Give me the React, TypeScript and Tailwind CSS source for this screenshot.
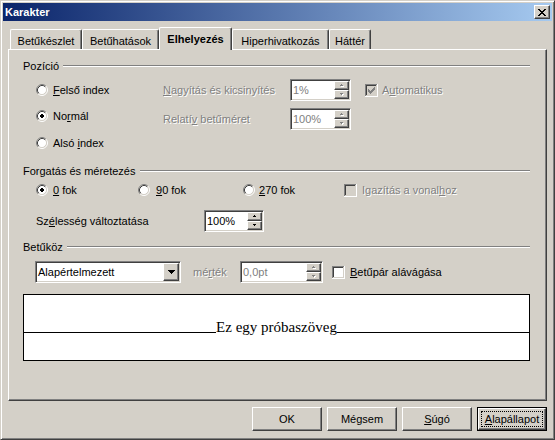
import React from "react";

const ui = "font-['Liberation_Sans',Arial,sans-serif] text-[11px] leading-[13px]";
const off = "text-[#808080] [text-shadow:1px_1px_0_#fff]";
const raised =
  "border border-t-white border-l-white border-r-[#404040] border-b-[#404040] shadow-[inset_-1px_-1px_0_#808080]";
const sunken =
  "border border-t-[#808080] border-l-[#808080] border-r-white border-b-white shadow-[inset_1px_1px_0_#404040,inset_-1px_-1px_0_#d4d0c8]";

const Radio = ({ checked }: { checked?: boolean }) => (
  <svg width="12" height="12" viewBox="0 0 12 12" className="shrink-0">
    <circle cx="6" cy="6" r="4.5" fill="#fff" />
    <path d="M2.11 9.89 A5.5 5.5 0 0 1 9.89 2.11" stroke="#808080" fill="none" />
    <path d="M9.89 2.11 A5.5 5.5 0 0 1 2.11 9.89" stroke="#fff" fill="none" />
    <path d="M2.82 9.18 A4.5 4.5 0 0 1 9.18 2.82" stroke="#404040" fill="none" />
    <path d="M9.18 2.82 A4.5 4.5 0 0 1 2.82 9.18" stroke="#d4d0c8" fill="none" />
    {checked && (
      <g shapeRendering="crispEdges" fill="#000">
        <rect x="4" y="5" width="4" height="2" />
        <rect x="5" y="4" width="2" height="4" />
      </g>
    )}
  </svg>
);

// classic 13x13 check box, drawn pixel by pixel
const Check = ({ checked, disabled }: { checked?: boolean; disabled?: boolean }) => {
  const mark = disabled ? "#808080" : "#000";
  const cols = [
    [3, 5], [4, 6], [5, 7], [6, 6], [7, 5], [8, 4], [9, 3],
  ];
  return (
    <svg width="13" height="13" viewBox="0 0 13 13" shapeRendering="crispEdges" className="shrink-0">
      <rect x="0" y="0" width="13" height="13" fill="#fff" />
      <rect x="0" y="0" width="12" height="1" fill="#808080" />
      <rect x="0" y="0" width="1" height="12" fill="#808080" />
      <rect x="1" y="1" width="10" height="1" fill="#404040" />
      <rect x="1" y="1" width="1" height="10" fill="#404040" />
      <rect x="1" y="11" width="11" height="1" fill="#d4d0c8" />
      <rect x="11" y="1" width="1" height="11" fill="#d4d0c8" />
      <rect x="2" y="2" width="9" height="9" fill={disabled ? "#d4d0c8" : "#fff"} />
      {checked && cols.map(([x, y]) => <rect key={x} x={x} y={y} width="1" height="3" fill={mark} />)}
    </svg>
  );
};

const SpinArrow = ({ up, disabled }: { up?: boolean; disabled?: boolean }) => {
  const rows = up ? [[1, 0, 1], [0, 1, 3]] : [[0, 0, 3], [1, 1, 1]];
  return (
    <svg width="4" height="3" viewBox="0 0 4 3" shapeRendering="crispEdges">
      {disabled && rows.map(([x, y, w]) => <rect key={"s" + y} x={x + 1} y={y + 1} width={w} height="1" fill="#fff" />)}
      {rows.map(([x, y, w]) => <rect key={y} x={x} y={y} width={w} height="1" fill={disabled ? "#808080" : "#000"} />)}
    </svg>
  );
};

const Spin = ({ value, w, disabled }: { value: string; w: string; disabled?: boolean }) => (
  <div className={`${sunken} ${w} bg-white h-[22px] p-[1px] flex shrink-0`}>
    <div className={`flex-1 flex items-center pl-[1px] ${disabled ? "text-[#808080]" : ""}`}>{value}</div>
    <div className="w-[15px] flex flex-col">
      <div className={`${raised} bg-[#d4d0c8] h-[9px] flex items-center justify-center`}>
        <SpinArrow up disabled={disabled} />
      </div>
      <div className={`${raised} bg-[#d4d0c8] h-[9px] flex items-center justify-center`}>
        <SpinArrow disabled={disabled} />
      </div>
    </div>
  </div>
);

const Group = ({ title }: { title: string }) => (
  <div className="h-[14px] flex items-center">
    <span>{title}</span>
    <div className="flex-1 ml-[4px] h-[2px] border-t border-t-[#808080] border-b border-b-white" />
  </div>
);

const Tab = ({ w, active, children }: { w: string; active?: boolean; children: React.ReactNode }) => (
  <div
    className={`${w} flex justify-center border-l border-t border-r border-l-white border-t-white border-r-[#404040] shadow-[inset_-1px_0_0_#808080] rounded-t-[2px] bg-[#d4d0c8] ${
      active ? "h-[23px] mb-[-1px] relative z-10 pt-[5px] font-bold" : "h-[20px] pt-[5px]"
    }`}
  >
    {children}
  </div>
);

const Btn = ({ children, def }: { children: React.ReactNode; def?: boolean }) =>
  def ? (
    <div className="w-[70px] h-[24px] border border-black flex">
      <div className={`${raised} flex-1 flex p-[2px]`}>
        <div className="flex-1 border border-dotted border-black flex items-center justify-center">{children}</div>
      </div>
    </div>
  ) : (
    <div className={`${raised} w-[70px] h-[24px] flex items-center justify-center`}>{children}</div>
  );

const CloseX = () => {
  const rows = [
    [[0, 2], [6, 2]],
    [[1, 2], [5, 2]],
    [[2, 4]],
    [[3, 2]],
    [[2, 4]],
    [[1, 2], [5, 2]],
    [[0, 2], [6, 2]],
  ];
  return (
    <svg width="8" height="7" viewBox="0 0 8 7" shapeRendering="crispEdges">
      {rows.map((r, y) => r.map(([x, w]) => <rect key={y + "-" + x} x={x} y={y} width={w} height="1" fill="#000" />))}
    </svg>
  );
};

export default function App() {
  return (
    <div
      className={`${ui} w-[555px] h-[440px] bg-[#d4d0c8] text-black border border-t-[#d4d0c8] border-l-[#d4d0c8] border-r-[#404040] border-b-[#404040] shadow-[inset_1px_1px_0_#fff,inset_-1px_-1px_0_#808080] p-[2px] flex flex-col`}
    >
      <div className="h-[18px] shrink-0 flex items-center pl-[2px] pr-[2px] bg-[linear-gradient(to_right,#0a246a,#a6caf0)]">
        <span className="flex-1 font-bold text-white">Karakter</span>
        <div className={`${raised} bg-[#d4d0c8] w-[16px] h-[14px] flex items-center justify-center`}>
          <CloseX />
        </div>
      </div>

      <div className="flex flex-col px-[5px]">
        <div className="mt-[6px] h-[22px] flex items-end pl-[2px]">
          <Tab w="w-[72px]">Betűkészlet</Tab>
          <Tab w="w-[77px]">Betűhatások</Tab>
          <Tab w="w-[73px]" active>Elhelyezés</Tab>
          <Tab w="w-[97px]">Hiperhivatkozás</Tab>
          <Tab w="w-[42px]">Háttér</Tab>
        </div>

        <div className="h-[352px] border border-t-white border-l-white border-r-[#404040] border-b-[#404040] shadow-[inset_-1px_-1px_0_#808080] flex flex-col pl-[14px] pr-[16px] pt-[9px]">
          <Group title="Pozíció" />
          <div className="flex pl-[13px]">
            <div className="w-[127px] flex flex-col">
              <div className="mt-[10px] h-[14px] flex items-center gap-[5px]">
                <Radio />
                <span><u>F</u>első index</span>
              </div>
              <div className="mt-[12px] h-[14px] flex items-center gap-[5px]">
                <Radio checked />
                <span>No<u>r</u>mál</span>
              </div>
              <div className="mt-[13px] h-[14px] flex items-center gap-[5px]">
                <Radio />
                <span>Alsó <u>i</u>ndex</span>
              </div>
            </div>
            <div className="flex flex-col">
              <div className="mt-[6px] h-[22px] flex items-center">
                <span className={`w-[127px] ${off}`}><u>N</u>agyítás és kicsinyítés</span>
                <Spin value="1%" w="w-[61px]" disabled />
                <div className="ml-[14px] flex items-center gap-[4px]">
                  <Check checked disabled />
                  <span className={off}>A<u>u</u>tomatikus</span>
                </div>
              </div>
              <div className="mt-[7px] h-[22px] flex items-center">
                <span className={`w-[127px] ${off}`}>Relatí<u>v</u> betűméret</span>
                <Spin value="100%" w="w-[61px]" disabled />
              </div>
            </div>
          </div>

          <div className="mt-[14px]">
            <Group title="Forgatás és méretezés" />
          </div>
          <div className="mt-[5px] h-[14px] flex items-center pl-[13px]">
            <div className="w-[102px] flex items-center gap-[5px]">
              <Radio checked />
              <span><u>0</u> fok</span>
            </div>
            <div className="w-[105px] flex items-center gap-[6px]">
              <Radio />
              <span><u>9</u>0 fok</span>
            </div>
            <div className="w-[101px] flex items-center gap-[4px]">
              <Radio />
              <span><u>2</u>70 fok</span>
            </div>
            <div className="flex items-center gap-[5px]">
              <Check disabled />
              <span className={off}>Igazítás a vonal<u>h</u>oz</span>
            </div>
          </div>
          <div className="mt-[13px] h-[22px] flex items-center pl-[13px]">
            <span className="w-[168px]">Sz<u>é</u>lesség változtatása</span>
            <Spin value="100%" w="w-[60px]" />
          </div>

          <div className="mt-[8px]">
            <Group title="Betűköz" />
          </div>
          <div className="mt-[7px] h-[22px] flex items-center pl-[12px]">
            <div className={`${sunken} bg-white w-[146px] h-[22px] p-[1px] flex`}>
              <div className="flex-1 flex items-center pl-[1px]">Alapértelmezett</div>
              <div className={`${raised} bg-[#d4d0c8] w-[16px] flex items-center justify-center`}>
                <svg width="7" height="4" viewBox="0 0 7 4" shapeRendering="crispEdges">
                  <rect x="0" y="0" width="7" height="1" fill="#000" />
                  <rect x="1" y="1" width="5" height="1" fill="#000" />
                  <rect x="2" y="2" width="3" height="1" fill="#000" />
                  <rect x="3" y="3" width="1" height="1" fill="#000" />
                </svg>
              </div>
            </div>
            <span className={`ml-[12px] w-[47px] ${off}`}>mé<u>r</u>ték</span>
            <Spin value="0,0pt" w="w-[83px]" disabled />
            <div className="ml-[9px] flex items-center gap-[5px]">
              <Check />
              <span><u>B</u>etűpár alávágása</span>
            </div>
          </div>

          <div className="mt-[11px] h-[67px] border border-black bg-white flex flex-col">
            <div className="h-[38px] border-b border-black flex justify-center items-end">
              <span className="relative translate-y-[3px] bg-white font-['Liberation_Serif','Times_New_Roman',serif] text-[15px] leading-[15px]">
                Ez egy próbaszöveg
              </span>
            </div>
          </div>
        </div>

        <div className="mt-[6px] flex justify-end gap-[5px]">
          <Btn>OK</Btn>
          <Btn>Mégsem</Btn>
          <Btn><u>S</u>úgó</Btn>
          <Btn def><u>A</u>lapállapot</Btn>
        </div>
      </div>
    </div>
  );
}
